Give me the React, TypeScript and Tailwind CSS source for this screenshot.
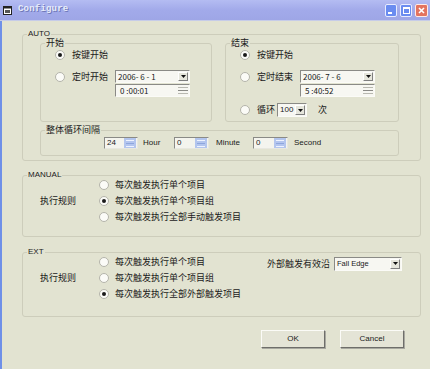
import React from "react";

const BG = "bg-[#e2e3d1]";

function Radio({ checked }: { checked?: boolean }) {
  return (
    <span className="w-[10px] h-[10px] rounded-full border border-[#b4b4aa] bg-[#fbfbf7] flex items-center justify-center shrink-0">
      {checked && <span className="w-[4px] h-[4px] rounded-full bg-[#1a1a1a]" />}
    </span>
  );
}

function Group({
  label,
  className,
  children,
}: {
  label: string;
  className: string;
  children?: React.ReactNode;
}) {
  return (
    <div className={`relative border border-[#cdcdbb] rounded-[3px] shrink-0 ${className}`}>
      <span className="absolute left-[4px] top-[-7px] px-[1px] bg-[#e2e3d1] leading-[12px] whitespace-nowrap">
        {label}
      </span>
      {children}
    </div>
  );
}

function Arrow() {
  return (
    <svg width="5" height="3" viewBox="0 0 5 3">
      <path d="M0 0h5L2.5 3z" fill="#111" />
    </svg>
  );
}

function DateCombo({ value }: { value: string }) {
  return (
    <div className="w-[75px] h-[13px] flex items-center border border-t-[#8a8a86] border-l-[#8a8a86] border-b-[#fbfbf7] border-r-[#fbfbf7] bg-[#f7f7f2] shrink-0">
      <span className="flex-1 pl-[2px] text-[8px] leading-none whitespace-pre">{value}</span>
      <span className="w-[10px] h-[9px] mr-[1px] flex items-center justify-center bg-[#e6e6dc] border border-t-white border-l-white border-b-[#808080] border-r-[#808080]">
        <Arrow />
      </span>
    </div>
  );
}

function TimeSpin({ value }: { value: string }) {
  return (
    <div className="w-[75px] h-[13px] flex items-center border border-t-[#8a8a86] border-l-[#8a8a86] border-b-[#fbfbf7] border-r-[#fbfbf7] bg-[#f7f7f2] shrink-0">
      <span className="flex-1 pl-[4px] text-[8px] leading-none whitespace-pre">{value}</span>
      <span className="w-[10px] h-[10px] mr-[1px] flex flex-col justify-center gap-[2px]">
        <span className="h-[1px] bg-[#b8b8b0]" />
        <span className="h-[1px] bg-[#8a8a86]" />
        <span className="h-[1px] bg-[#b8b8b0]" />
      </span>
    </div>
  );
}

function IntSpin({ value, w }: { value: string; w: string }) {
  return (
    <div className={`h-[12px] flex items-center border border-t-[#8a8a86] border-l-[#8a8a86] border-b-[#e8e8e0] border-r-[#e8e8e0] bg-[#f4f4ee] shrink-0 ${w}`}>
      <span className="flex-1 pl-[2px] text-[8px] leading-none">{value}</span>
      <span className="w-[12px] h-[10px] mr-[1px] flex flex-col bg-[#b3c5ee] justify-center gap-[2px] px-[2px]">
        <span className="h-[1px] bg-[#eef3ff]" />
        <span className="h-[1px] bg-[#8ea6dd]" />
        <span className="h-[1px] bg-[#eef3ff]" />
      </span>
    </div>
  );
}

function Btn({ label }: { label: string }) {
  return (
    <div className="w-[64px] h-[18px] flex items-center justify-center border border-t-[#fbfbf7] border-l-[#fbfbf7] border-b-[#6e6e6a] border-r-[#6e6e6a] bg-[#e4e4d6] text-[8px] shadow-[1px_1px_0_#a8a8a0]">
      {label}
    </div>
  );
}

export default function App() {
  const cjk = "font-['Noto_Sans_CJK_SC',sans-serif] text-[9px]";
  return (
    <div className={`w-[430px] h-[369px] ${BG} overflow-hidden text-[#1a1a1a] font-['Liberation_Sans','Noto_Sans_CJK_SC',sans-serif] text-[8px]`}>
      {/* Title bar */}
      <div className="h-[21px] flex items-center bg-gradient-to-b from-[#b4bcf2] via-[#a2aaea] to-[#9ea6e6] border-b border-[#c6cce8]">
        <svg width="9" height="9" viewBox="0 0 9 9" className="ml-[3px]">
          <rect x="0.5" y="0.5" width="8" height="8" fill="#fff" stroke="#222" />
          <rect x="0.5" y="0.5" width="8" height="2" fill="#222" />
          <rect x="2" y="4" width="5" height="3" fill="#555" />
        </svg>
        <span className="ml-[6px] font-['Liberation_Mono',monospace] text-[9px] font-bold text-[#e6ecfa] [text-shadow:1px_1px_0_#6f78b8] tracking-[0.2px]">
          Configure
        </span>
        <div className="ml-auto mr-[2px] flex gap-[3px]">
          <div className="w-[12px] h-[13px] rounded-[2px] border border-[#e8ecff] bg-[#6a8cf0] flex items-end justify-start pl-[2px] pb-[2px]">
            <span className="w-[4px] h-[2px] bg-white" />
          </div>
          <div className="w-[12px] h-[13px] rounded-[2px] border border-[#e8ecff] bg-[#6a8cf0] flex items-center justify-center">
            <span className="w-[7px] h-[7px] border border-white border-t-2" />
          </div>
          <div className="w-[13px] h-[13px] rounded-[2px] border border-[#ffeae6] bg-[#e3735f] flex items-center justify-center">
            <svg width="7" height="7" viewBox="0 0 7 7">
              <path d="M1 1l5 5M6 1L1 6" stroke="#fff" strokeWidth="1.6" />
            </svg>
          </div>
        </div>
      </div>

      {/* Body */}
      <div className="h-[348px] flex flex-col border-l-2 border-[#6f90e8]">
        {/* AUTO */}
        <Group label="AUTO" className="ml-[20px] mt-[13px] w-[399px] h-[127px]">
          <div className="flex mt-[8px] ml-[17px]">
            <Group label="开始" className={`w-[172px] h-[79px] ${cjk}`}>
              <div className="flex items-center mt-[5px] ml-[14px] h-[12px] gap-[7px]">
                <Radio checked />
                <span className={cjk}>按键开始</span>
              </div>
              <div className="flex items-center mt-[9px] ml-[14px] h-[13px]">
                <Radio />
                <span className={`ml-[7px] w-[43px] ${cjk}`}>定时开始</span>
                <DateCombo value="2006- 6 - 1" />
              </div>
              <div className="ml-[74px] mt-[1px]">
                <TimeSpin value="0 :00:01" />
              </div>
            </Group>
            <Group label="结束" className={`ml-[13px] w-[174px] h-[79px] ${cjk}`}>
              <div className="flex items-center mt-[5px] ml-[14px] h-[12px] gap-[7px]">
                <Radio checked />
                <span className={cjk}>按键开始</span>
              </div>
              <div className="flex items-center mt-[9px] ml-[14px] h-[13px]">
                <Radio />
                <span className={`ml-[7px] w-[43px] ${cjk}`}>定时结束</span>
                <DateCombo value="2006- 7 - 6" />
              </div>
              <div className="ml-[74px] mt-[1px]">
                <TimeSpin value="5 :40:52" />
              </div>
              <div className="flex items-center mt-[6px] ml-[14px] h-[14px]">
                <Radio />
                <span className={`ml-[7px] w-[20px] ${cjk}`}>循环</span>
                <div className="w-[30px] h-[14px] flex items-center border border-t-[#8a8a86] border-l-[#8a8a86] border-b-[#fbfbf7] border-r-[#fbfbf7] bg-[#f7f7f2]">
                  <span className="flex-1 pl-[2px] text-[8px] leading-none font-['Liberation_Sans',sans-serif]">100</span>
                  <span className="w-[10px] h-[10px] mr-[1px] flex items-center justify-center bg-[#e6e6dc] border border-t-white border-l-white border-b-[#808080] border-r-[#808080]">
                    <Arrow />
                  </span>
                </div>
                <span className={`ml-[11px] ${cjk}`}>次</span>
              </div>
            </Group>
          </div>
          <Group label="整体循环间隔" className={`mt-[8px] ml-[17px] w-[359px] h-[26px] ${cjk}`}>
            <div className="flex items-center mt-[6px] ml-[63px] font-['Liberation_Sans',sans-serif] text-[8px]">
              <IntSpin value="24" w="w-[34px]" />
              <span className="ml-[5px] w-[31px]">Hour</span>
              <IntSpin value="0" w="w-[35px]" />
              <span className="ml-[7px] w-[37px]">Minute</span>
              <IntSpin value="0" w="w-[35px]" />
              <span className="ml-[6px]">Second</span>
            </div>
          </Group>
        </Group>

        {/* MANUAL */}
        <Group label="MANUAL" className="ml-[20px] mt-[14px] w-[399px] h-[62px]">
          <div className="mt-[1px] flex flex-col">
            {["每次触发执行单个项目", "每次触发执行单个项目组", "每次触发执行全部手动触发项目"].map((t, i) => (
              <div key={i} className="flex items-center h-[16px]">
                <span className={`w-[76px] pl-[17px] ${cjk}`}>{i === 1 ? "执行规则" : ""}</span>
                <Radio checked={i === 1} />
                <span className={`ml-[6px] ${cjk}`}>{t}</span>
              </div>
            ))}
          </div>
        </Group>

        {/* EXT */}
        <Group label="EXT" className="ml-[20px] mt-[15px] w-[399px] h-[65px]">
          <div className="mt-[1px] flex flex-col">
            {["每次触发执行单个项目", "每次触发执行单个项目组", "每次触发执行全部外部触发项目"].map((t, i) => (
              <div key={i} className="flex items-center h-[16px]">
                <span className={`w-[76px] pl-[17px] ${cjk}`}>{i === 1 ? "执行规则" : ""}</span>
                <Radio checked={i === 2} />
                <span className={`ml-[6px] ${cjk}`}>{t}</span>
                {i === 0 && (
                  <div className="ml-auto mr-[18px] mt-[3px] flex items-center">
                    <span className={`${cjk}`}>外部触发有效沿</span>
                    <div className="ml-[4px] w-[68px] h-[14px] flex items-center border border-t-[#8a8a86] border-l-[#8a8a86] border-b-[#fbfbf7] border-r-[#fbfbf7] bg-[#f7f7f2]">
                      <span className="flex-1 pl-[2px] text-[7.5px] leading-none font-['Liberation_Sans',sans-serif]">Fall Edge</span>
                      <span className="w-[10px] h-[10px] mr-[1px] flex items-center justify-center bg-[#e6e6dc] border border-t-white border-l-white border-b-[#808080] border-r-[#808080]">
                        <Arrow />
                      </span>
                    </div>
                  </div>
                )}
              </div>
            ))}
          </div>
        </Group>

        {/* Buttons */}
        <div className="flex mt-[13px] ml-[259px]">
          <Btn label="OK" />
          <div className="ml-[15px]">
            <Btn label="Cancel" />
          </div>
        </div>
      </div>
    </div>
  );
}
